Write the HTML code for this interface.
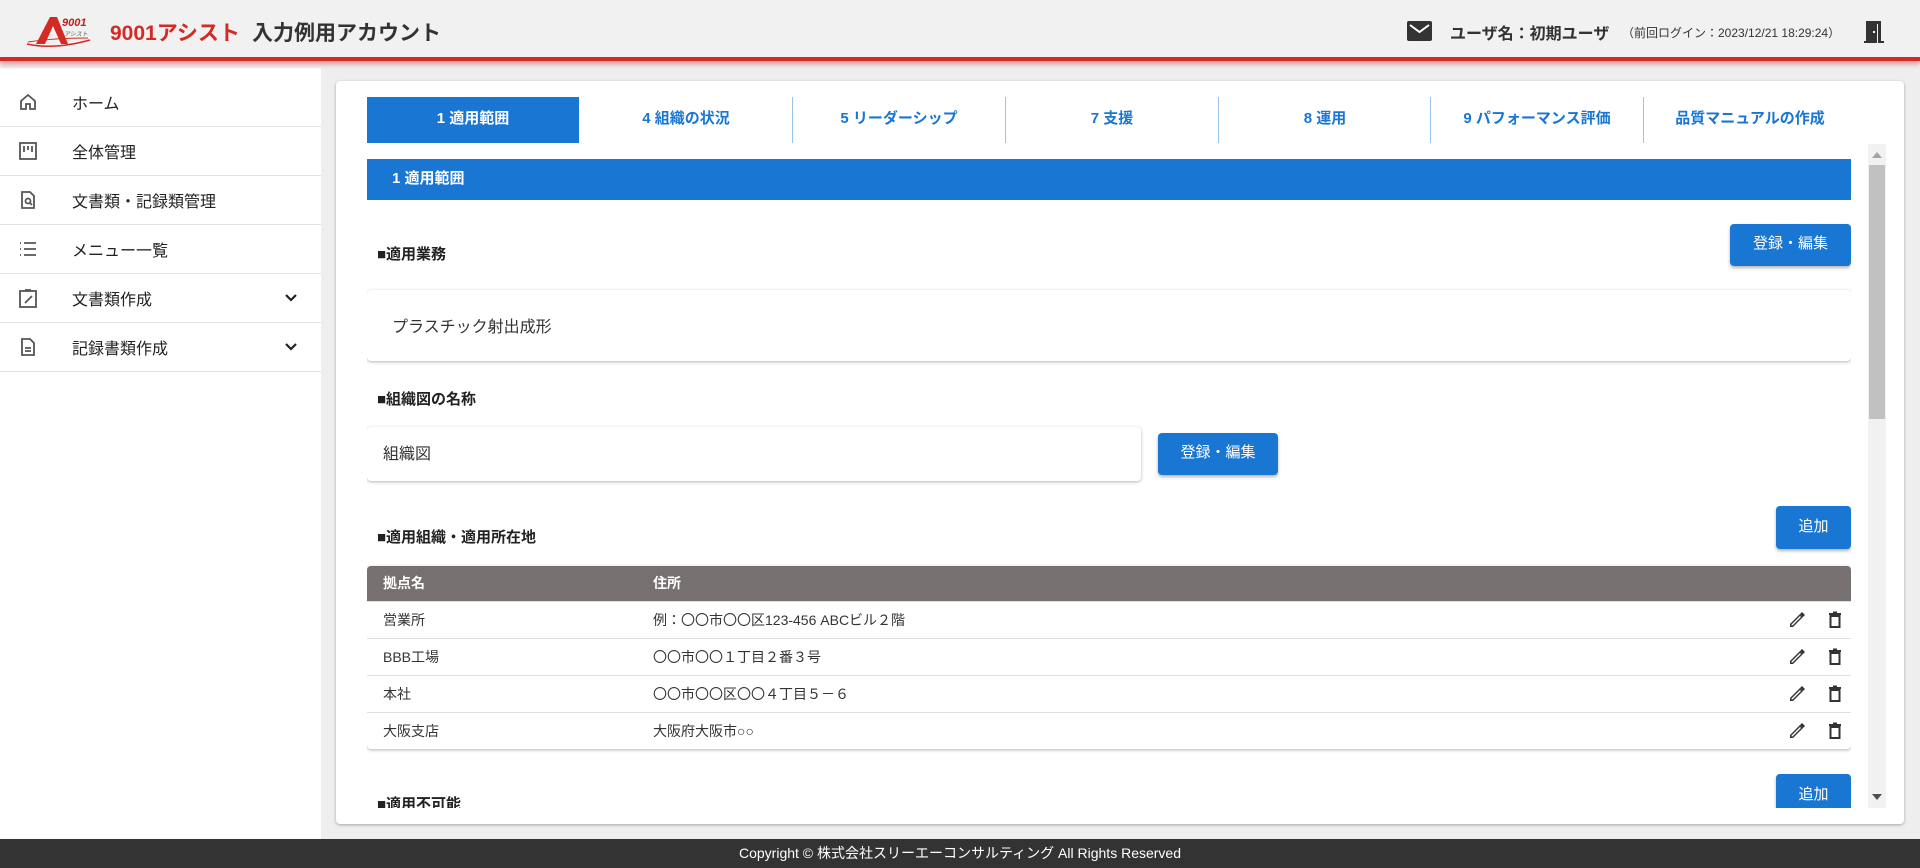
<!DOCTYPE html>
<html><head><meta charset="utf-8"><style>
*{box-sizing:border-box;margin:0;padding:0}
body{width:1920px;height:868px;overflow:hidden;background:#eeeeee;font-family:"Liberation Sans","Noto Sans CJK JP",sans-serif;color:#222;position:relative}
.abs{position:absolute}
#hdr{left:0;top:0;width:1920px;height:61px;background:#f1f1f1;border-bottom:4px solid #d42a24;box-shadow:0 3px 5px rgba(200,40,40,.45);z-index:2}
#side{left:0;top:68px;width:321px;height:771px;background:#fff}
.item{position:absolute;left:0;width:321px;height:49px;border-bottom:1.5px solid #e2e2e2;font-size:16px;color:#222}
.item span{position:absolute;left:72px;top:12px}
.item svg{position:absolute;left:18px;top:14px}
#card{left:336px;top:81px;width:1568px;height:743px;background:#fff;border-radius:4px;box-shadow:0 1px 3px rgba(0,0,0,.3)}
.tab{position:absolute;top:97px;height:46px;width:212px;font-size:15px;font-weight:bold;color:#1976d2;text-align:center;line-height:44px}
.sep{position:absolute;top:97px;height:46px;width:1px;background:#9cc3ea}
#scroll{left:367px;top:144px;width:1484px;height:664px;overflow:hidden}
.h{position:absolute;font-size:15px;font-weight:bold;color:#222}
.btn{position:absolute;background:#1976d2;color:#fff;font-size:15px;text-align:center;border-radius:4px;box-shadow:0 2px 3px rgba(0,0,0,.3)}
.box{position:absolute;background:#fff;border-radius:4px;box-shadow:0 1px 3px rgba(0,0,0,.3);font-size:16px;color:#333}
.row{position:absolute;left:0;width:1484px;height:37px;border-top:1px solid #e0e0e0;font-size:14px;color:#333}
.row .a{position:absolute;left:16px;top:8px}
.row .b{position:absolute;left:286px;top:8px}
#foot{left:0;top:839px;width:1920px;height:29px;background:#333;color:#fff;font-size:14px;text-align:center;line-height:28px}
</style></head><body>
<div id="hdr" class="abs">
 <svg class="abs" style="left:24px;top:14px" width="70" height="34" viewBox="0 0 70 34">
  <path d="M3 30 Q30 36 66 26" fill="none" stroke="#d42a24" stroke-width="1.5"/>
  <path d="M4 28 Q30 24 64 24" fill="none" stroke="#d42a24" stroke-width="1"/>
  <path d="M12 30 L26 3 L33 3 L44 30 L37 30 L29 12 L21 30Z" fill="#d42a24"/>
  <text x="38" y="12" font-size="11" font-style="italic" font-weight="bold" fill="#c0201c" font-family="Liberation Sans">9001</text>
  <text x="40" y="22" font-size="6" font-style="italic" fill="#555">アシスト</text>
 </svg>
 <div class="abs" style="left:110px;top:17px;font-size:21px;font-weight:bold;color:#d42a24">9001アシスト</div>
 <div class="abs" style="left:252px;top:17px;font-size:21px;font-weight:bold;color:#333">入力例用アカウント</div>
 <svg class="abs" style="left:1407px;top:21px" width="25" height="20" viewBox="0 0 25 20"><rect width="25" height="20" rx="2" fill="#333"/><path d="M3 4 L12.5 11 L22 4" stroke="#fff" stroke-width="2" fill="none"/></svg>
 <div class="abs" style="left:1450px;top:20px;font-size:16px;font-weight:bold;color:#333">ユーザ名：初期ユーザ</div>
 <div class="abs" style="left:1622px;top:24px;font-size:12px;color:#333">（前回ログイン：2023/12/21 18:29:24）</div>
 <svg class="abs" style="left:1864px;top:20px" width="22" height="24" viewBox="0 0 22 24"><rect x="2" y="1" width="11" height="22" fill="#333"/><rect x="0" y="21" width="4" height="2" fill="#333"/><rect x="14" y="3" width="3" height="20" fill="#333"/><rect x="14" y="21" width="6" height="2" fill="#333"/><rect x="13" y="1" width="4" height="3" fill="#333"/><rect x="9" y="11" width="2" height="2" fill="#fff"/></svg>
</div>
<div id="side" class="abs">
 <div class="item" style="top:10px"><svg width="20" height="20" viewBox="0 0 20 20" fill="none" stroke="#555" stroke-width="1.8"><path d="M3 9 L10 3 L17 9 V17 H12 V12 H8 V17 H3Z"/></svg><span>ホーム</span></div>
 <div class="item" style="top:59px"><svg width="20" height="20" viewBox="0 0 20 20" fill="none" stroke="#555" stroke-width="1.8"><rect x="2" y="2" width="16" height="16"/><path d="M6 5 V11 M10 5 V9 M14 5 V11"/></svg><span>全体管理</span></div>
 <div class="item" style="top:108px"><svg width="20" height="20" viewBox="0 0 20 20" fill="none" stroke="#555" stroke-width="1.8"><path d="M4 2 H12 L16 6 V18 H4Z"/><circle cx="10" cy="11" r="2.5"/><path d="M12 13 L14 15"/></svg><span>文書類・記録類管理</span></div>
 <div class="item" style="top:157px"><svg width="20" height="20" viewBox="0 0 20 20" fill="none" stroke="#555" stroke-width="1.8"><path d="M2 4 H3 M2 10 H3 M2 16 H3 M6 4 H18 M6 10 H18 M6 16 H18"/></svg><span>メニュー一覧</span></div>
 <div class="item" style="top:206px"><svg width="20" height="20" viewBox="0 0 20 20" fill="none" stroke="#555" stroke-width="1.8"><rect x="2" y="3" width="16" height="16"/><path d="M7 15 L14 8 M7 2 H13"/></svg><span>文書類作成</span><svg width="14" height="14" viewBox="0 0 14 14" style="left:284px;top:17px"><path d="M2 4 L7 9 L12 4" stroke="#222" stroke-width="2.2" fill="none"/></svg></div>
 <div class="item" style="top:255px"><svg width="20" height="20" viewBox="0 0 20 20" fill="none" stroke="#555" stroke-width="1.8"><path d="M4 2 H12 L16 6 V18 H4Z M7 11 H13 M7 14 H13"/></svg><span>記録書類作成</span><svg width="14" height="14" viewBox="0 0 14 14" style="left:284px;top:17px"><path d="M2 4 L7 9 L12 4" stroke="#222" stroke-width="2.2" fill="none"/></svg></div>
</div>
<div id="card" class="abs"></div>
<div class="tab" style="left:367px;background:#1976d2;color:#fff">1 適用範囲</div>
<div class="tab" style="left:580px">4 組織の状況</div>
<div class="sep" style="left:792px"></div>
<div class="tab" style="left:793px">5 リーダーシップ</div>
<div class="sep" style="left:1005px"></div>
<div class="tab" style="left:1006px">7 支援</div>
<div class="sep" style="left:1218px"></div>
<div class="tab" style="left:1219px">8 運用</div>
<div class="sep" style="left:1430px"></div>
<div class="tab" style="left:1431px">9 パフォーマンス評価</div>
<div class="sep" style="left:1643px"></div>
<div class="tab" style="left:1644px">品質マニュアルの作成</div>
<div id="scroll" class="abs">
 <div class="abs" style="left:0;top:15px;width:1484px;height:41px;background:#1976d2;color:#fff;font-weight:bold;font-size:15px;line-height:39px;padding-left:25px">1 適用範囲</div>
 <div class="h" style="left:10px;top:99px">■適用業務</div>
 <div class="btn" style="left:1363px;top:80px;width:121px;height:42px;line-height:40px">登録・編集</div>
 <div class="box" style="left:0;top:146px;width:1484px;height:71px;padding:23px 0 0 25px">プラスチック射出成形</div>
 <div class="h" style="left:10px;top:244px">■組織図の名称</div>
 <div class="box" style="left:0;top:283px;width:774px;height:54px;padding:13px 0 0 16px">組織図</div>
 <div class="btn" style="left:791px;top:289px;width:120px;height:42px;line-height:40px">登録・編集</div>
 <div class="h" style="left:10px;top:382px">■適用組織・適用所在地</div>
 <div class="btn" style="left:1409px;top:362px;width:75px;height:43px;line-height:41px">追加</div>
 <div class="box" style="left:0;top:422px;width:1484px;height:183px;overflow:hidden">
  <div class="abs" style="left:0;top:0;width:1484px;height:35px;background:#767170;color:#fff;font-weight:bold;font-size:14px"><span class="abs" style="left:16px;top:7px">拠点名</span><span class="abs" style="left:286px;top:7px">住所</span></div>
  <div class="row" style="top:35px"><span class="a">営業所</span><span class="b">例：〇〇市〇〇区123-456 ABCビル２階</span></div>
  <div class="row" style="top:72px"><span class="a">BBB工場</span><span class="b">〇〇市〇〇１丁目２番３号</span></div>
  <div class="row" style="top:109px"><span class="a">本社</span><span class="b">〇〇市〇〇区〇〇４丁目５－６</span></div>
  <div class="row" style="top:146px"><span class="a">大阪支店</span><span class="b">大阪府大阪市○○</span></div>
 </div>
 <div class="h" style="left:10px;top:649px">■適用不可能</div>
 <div class="btn" style="left:1409px;top:630px;width:75px;height:43px;line-height:41px">追加</div>
</div>
<svg class="abs" style="left:0;top:0;pointer-events:none" width="1920" height="868">
 <defs>
  <g id="pen"><path d="M2 16 L2 13 L12 3 L15 6 L5 16Z" fill="#333"/><path d="M3.5 14.5 L3.5 13.5 L12 5 L13 6 L4.5 14.5Z" fill="#fff"/><path d="M12 3 L14 1 L17 4 L15 6" fill="#333"/></g>
  <g id="trash"><path d="M3 3 H15 M7 1.5 H11" stroke="#333" stroke-width="2"/><rect x="4.5" y="5" width="9" height="11" fill="none" stroke="#333" stroke-width="2"/></g>
 </defs>
 <use href="#pen" x="1788" y="611"/><use href="#trash" x="1826" y="611"/>
 <use href="#pen" x="1788" y="648"/><use href="#trash" x="1826" y="648"/>
 <use href="#pen" x="1788" y="685"/><use href="#trash" x="1826" y="685"/>
 <use href="#pen" x="1788" y="722"/><use href="#trash" x="1826" y="722"/>
 <rect x="1868" y="144" width="18" height="664" fill="#f1f1f1"/>
 <rect x="1869" y="165" width="16" height="254" fill="#c1c1c1"/>
 <path d="M1872 158 L1877 152 L1882 158Z" fill="#a3a3a3"/>
 <path d="M1872 794 L1877 800 L1882 794Z" fill="#505050"/>
</svg>
<div id="foot" class="abs">Copyright © 株式会社スリーエーコンサルティング All Rights Reserved</div>
</body></html>
